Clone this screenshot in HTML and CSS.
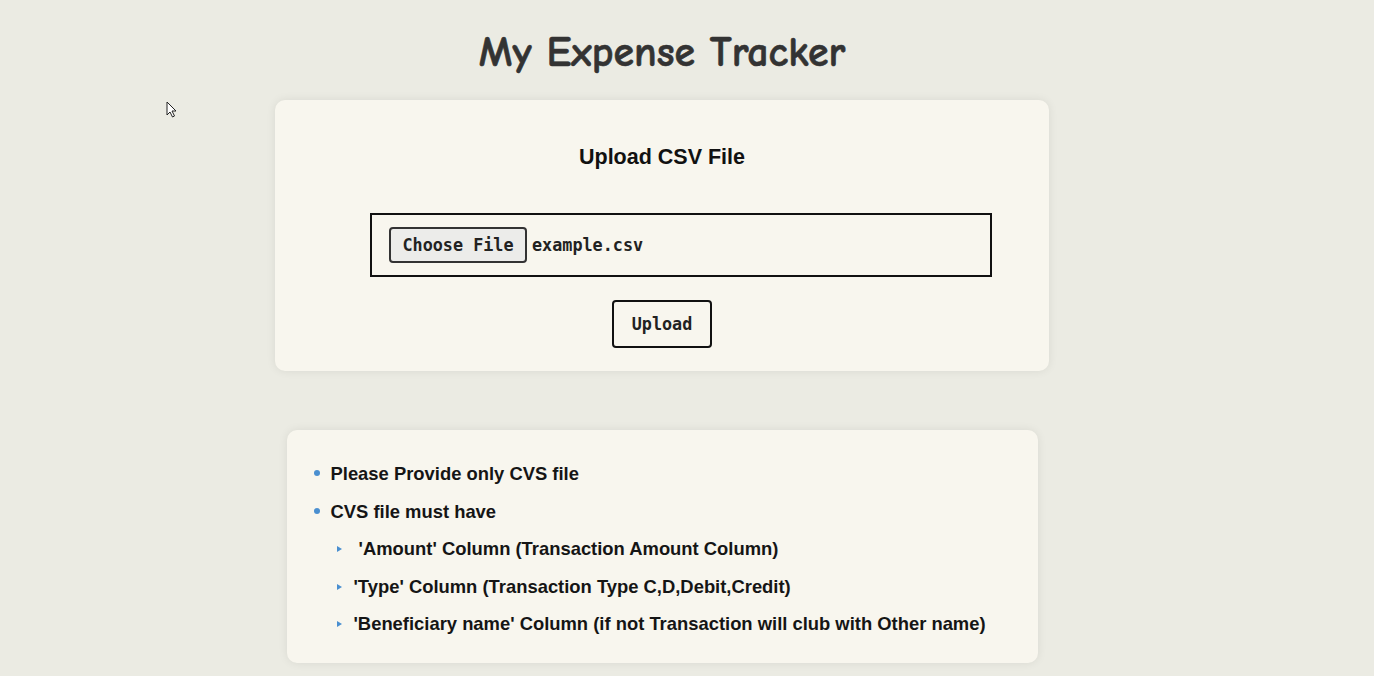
FILE: index.html
```html
<!DOCTYPE html>
<html>
<head>
<meta charset="utf-8">
<title>My Expense Tracker</title>
<link rel="stylesheet" href="styles.css">
</head>
<body>
<div class="page">
  <h1 class="title">My Expense Tracker</h1>
  <section class="card upload-card">
    <h2 class="card-title">Upload CSV File</h2>
    <div class="file-box">
      <span class="choose-btn">Choose File</span>
      <span class="file-name">example.csv</span>
    </div>
    <div class="actions">
      <button class="upload-btn">Upload</button>
    </div>
  </section>
  <section class="card info-card">
    <ul class="rules">
      <li>Please Provide only CVS file</li>
      <li>CVS file must have
        <ul class="sub-rules">
          <li>&nbsp;'Amount' Column (Transaction Amount Column)</li>
          <li>'Type' Column (Transaction Type C,D,Debit,Credit)</li>
          <li>'Beneficiary name' Column (if not Transaction will club with Other name)</li>
        </ul>
      </li>
    </ul>
  </section>
</div>
<svg class="cursor" width="12" height="18" viewBox="0 0 12 18"><path d="M1 1 L1 14 L4 11 L6.5 16 L8.5 15 L6 10 L10 10 Z" fill="#fff" stroke="#222" stroke-width="1"/></svg>
</body>
</html>
```
FILE: styles.css
```css
html, body {
  margin: 0;
  padding: 0;
}
body {
  background: #ebebe3;
  font-family: "Liberation Sans", Arial, sans-serif;
  height: 676px;
  overflow: hidden;
}
.page {
  width: 1324px;
  display: flex;
  flex-direction: column;
  align-items: center;
}
.title {
  font-family: "Comic Sans MS", "Comic Neue", cursive;
  font-size: 41.8px;
  font-weight: bold;
  color: #333;
  margin: 28px 0 0;
  line-height: 48px;
  height: 48px;
  -webkit-text-stroke: 0.6px #333;
}
.card {
  background: #f8f6ee;
  border-radius: 10px;
  box-shadow: 0 0 10px rgba(0,0,0,0.08);
  box-sizing: border-box;
}
.upload-card {
  width: 774px;
  height: 271px;
  margin-top: 24px;
  padding-top: 44px;
  display: flex;
  flex-direction: column;
}
.card-title {
  margin: 0;
  font-size: 21.5px;
  font-weight: bold;
  color: #111;
  text-align: center;
  line-height: 26px;
}
.file-box {
  margin: 43px 0 0 95px;
  width: 622px;
  height: 64px;
  box-sizing: border-box;
  border: 2px solid #111;
  display: flex;
  align-items: center;
  padding-left: 17px;
  gap: 5px;
  font-family: "DejaVu Sans Mono", "Liberation Mono", monospace;
  font-weight: bold;
  font-size: 16.8px;
  color: #222;
}
.choose-btn {
  box-sizing: border-box;
  width: 138px;
  height: 36px;
  border: 2px solid #333;
  border-radius: 4px;
  background: #ececea;
  display: flex;
  align-items: center;
  justify-content: center;
}
.actions {
  display: flex;
  justify-content: center;
  margin-top: 23px;
}
.upload-btn {
  width: 100px;
  height: 48px;
  border: 2px solid #111;
  border-radius: 4px;
  background: #f8f6ee;
  font-family: "DejaVu Sans Mono", "Liberation Mono", monospace;
  font-weight: bold;
  font-size: 16.8px;
  color: #222;
  padding: 0;
}
.info-card {
  width: 751px;
  margin-top: 59px;
  height: 233px;
  padding: 25px 30px 0 30px;
}
.rules {
  margin: 0;
  padding: 0 0 0 14px;
  list-style: none;
  font-size: 18.4px;
  font-weight: bold;
  color: #151515;
  line-height: 37.5px;
}
.rules > li {
  position: relative;
}
.rules > li::before {
  content: "";
  position: absolute;
  left: -17px;
  top: 15px;
  width: 6px;
  height: 6px;
  border-radius: 50%;
  background: #4a8fd0;
}
.sub-rules {
  list-style: none;
  margin: 0;
  padding: 0 0 0 23px;
}
.sub-rules > li {
  position: relative;
}
.sub-rules > li::before {
  content: "";
  position: absolute;
  left: -17px;
  top: 16px;
  width: 0;
  height: 0;
  border-left: 5px solid #4a8fd0;
  border-top: 3px solid transparent;
  border-bottom: 3px solid transparent;
}
.cursor {
  position: absolute;
  left: 166px;
  top: 101px;
}
```
